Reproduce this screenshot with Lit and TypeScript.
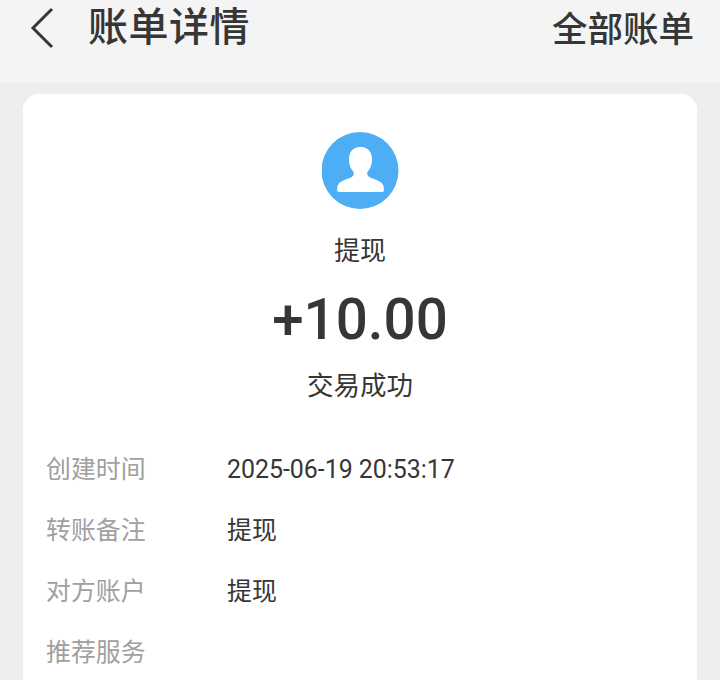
import { LitElement, css, html } from 'lit';
import { customElement } from 'lit/decorators.js';

@customElement('app-root')
export class AppRoot extends LitElement {
  static styles = css`
    :host {
      background: #eeeeee;
      color: #363636;
      display: block;
      font-family: Roboto, "Noto Sans CJK SC", sans-serif;
      height: 680px;
      overflow: hidden;
    }

    .topbar {
      align-items: center;
      background: #f4f4f4;
      box-sizing: border-box;
      display: flex;
      height: 83px;
      justify-content: space-between;
      padding: 0 26px 0 28px;
    }

    .topbar-left {
      align-items: center;
      display: flex;
      gap: 30px;
      margin-top: -28px;
    }

    .back {
      display: block;
      height: 42px;
      width: 30px;
    }

    .title {
      font-size: 40px;
      font-weight: 500;
      letter-spacing: 0.5px;
      line-height: 48px;
    }

    .all-bills {
      font-size: 35.500px;
      font-weight: 500;
      line-height: 44px;
      margin-top: -24px;
    }

    .card {
      background: #fff;
      border-radius: 16px;
      box-sizing: border-box;
      height: 640px;
      margin: 11px 23px 0;
      padding-top: 38px;
    }

    .summary {
      align-items: center;
      display: flex;
      flex-direction: column;
    }

    .avatar {
      display: block;
      height: 77px;
      width: 77px;
    }

    .kind {
      font-size: 26px;
      line-height: 36px;
      margin-top: 24px;
    }

    .amount {
      font-size: 56.500px;
      font-weight: 500;
      line-height: 70px;
      margin-top: 16px;
    }

    .status {
      font-size: 26.500px;
      line-height: 36px;
      margin-top: 13px;
    }

    .rows {
      display: grid;
      grid-auto-rows: 61.200px;
      grid-template-columns: 181px 1fr;
      margin-top: 35px;
      padding-left: 23px;
    }

    .label,
    .value {
      align-self: center;
      font-size: 24.900px;
      line-height: 36px;
    }

    .label {
      color: #a0a0a0;
    }
  `;

  render() {
    return html`
      <div class="topbar">
        <div class="topbar-left">
          <svg class="back" viewBox="0 0 30 42" fill="none" stroke="#363636" stroke-width="3">
            <path d="M24 2 5 21l19 19" />
          </svg>
          <span class="title">账单详情</span>
        </div>
        <span class="all-bills">全部账单</span>
      </div>
      <div class="card">
        <div class="summary">
          <svg class="avatar" viewBox="0 0 77 77">
            <circle cx="38" cy="38.500" r="38.500" fill="#4eaef5" />
            <path
              fill="#fff"
              d="M38 15c-7 0-11 5-11 12 0 6 2 10 4.500 13 1 2 0 4-2.500 5.500-5 2-12 3.500-13.500 8.500l-.5 4q0 2 2 2h43q2 0 2-2l-.5-4c-1.500-5-8.500-6.500-13.500-8.500-2.500-1.500-3.500-3.500-2.500-5.500 2.500-3 4.500-7 4.500-13 0-7-4-12-11-12z"
            />
          </svg>
          <div class="kind">提现</div>
          <div class="amount">+10.00</div>
          <div class="status">交易成功</div>
        </div>
        <div class="rows">
          <span class="label">创建时间</span><span class="value">2025-06-19 20:53:17</span>
          <span class="label">转账备注</span><span class="value">提现</span>
          <span class="label">对方账户</span><span class="value">提现</span>
          <span class="label">推荐服务</span><span class="value"></span>
        </div>
      </div>
    `;
  }
}
